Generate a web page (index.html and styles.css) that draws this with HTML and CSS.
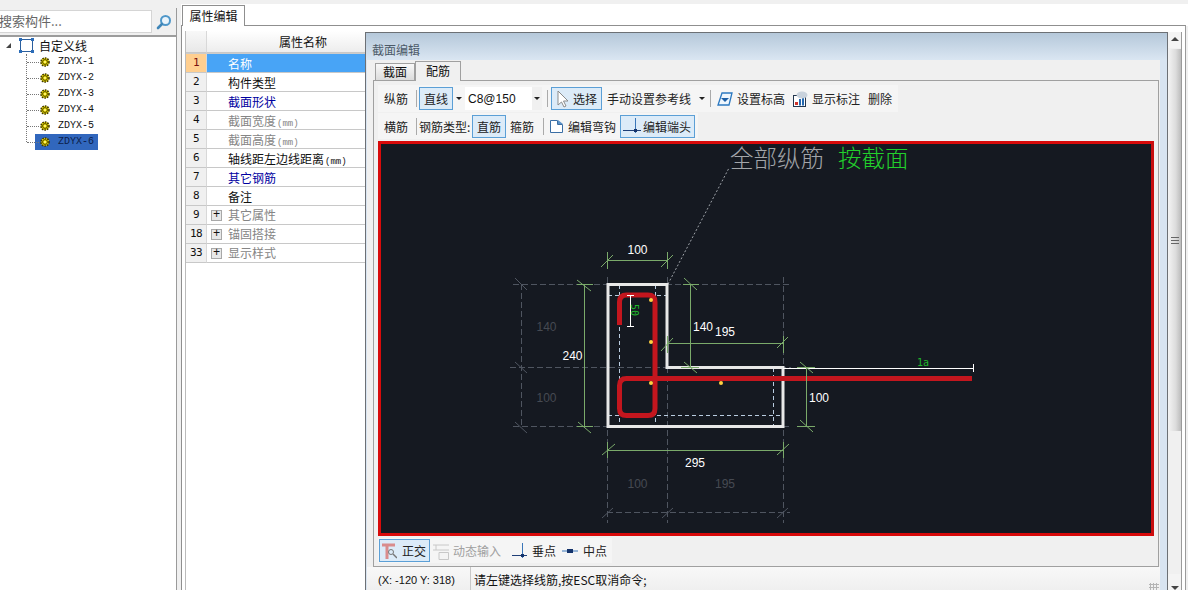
FILE: index.html
```html
<!DOCTYPE html>
<html lang="zh">
<head>
<meta charset="utf-8">
<title>属性编辑</title>
<link rel="stylesheet" href="styles.css">
</head>
<body>
<svg class="defs" width="0" height="0">
  <symbol id="gear" viewBox="0 0 10 10"><circle cx="5" cy="5" r="4" fill="#f6e800" stroke="#3f3600" stroke-width="1.600" stroke-dasharray="1.600 1"/><circle cx="5" cy="5" r="2.400" fill="none" stroke="#4a3f00"/><rect x="4" y="4" width="2" height="2" fill="#fff26a"/></symbol>
  <symbol id="perp" viewBox="0 0 18 16"><path d="M0 12.500h18" stroke="#1f3f77"/><path d="M12.500 0v15" stroke="#3a76b8"/><rect x="11" y="11" width="3" height="3" fill="#14336b"/></symbol>
</svg>
<div class="app">
  <aside class="left">
    <div class="search">
      <div class="search-box">搜索构件...</div>
      <svg class="search-icon" width="16" height="16" viewBox="0 0 16 16"><circle cx="9.500" cy="6.500" r="4.500" fill="#eaf4fb" stroke="#4f97c9" stroke-width="2"/><path d="M6 10 2 14" stroke="#3f86b8" stroke-width="2.600" stroke-linecap="round"/></svg>
    </div>
    <div class="tree">
      <div class="tree-root">
        <span class="tri"></span>
        <svg class="root-icon" width="15" height="15" viewBox="0 0 15 15"><rect x="1.500" y="1.500" width="12" height="12" fill="none" stroke="#2b5f9e"/><path d="M0 0h3v3H0zM12 0h3v3h-3zM0 12h3v3H0zM12 12h3v3h-3z" fill="#2b6cb8"/></svg>
        <span>自定义线</span>
      </div>
      <ul class="tree-list">
        <li class="tree-item"><svg class="gear" width="10" height="10"><use href="#gear"/></svg><span class="tree-label">ZDYX-1</span></li>
        <li class="tree-item"><svg class="gear" width="10" height="10"><use href="#gear"/></svg><span class="tree-label">ZDYX-2</span></li>
        <li class="tree-item"><svg class="gear" width="10" height="10"><use href="#gear"/></svg><span class="tree-label">ZDYX-3</span></li>
        <li class="tree-item"><svg class="gear" width="10" height="10"><use href="#gear"/></svg><span class="tree-label">ZDYX-4</span></li>
        <li class="tree-item"><svg class="gear" width="10" height="10"><use href="#gear"/></svg><span class="tree-label">ZDYX-5</span></li>
        <li class="tree-item selected"><svg class="gear" width="10" height="10"><use href="#gear"/></svg><span class="tree-label">ZDYX-6</span></li>
      </ul>
    </div>
  </aside>
  <main class="right">
    <div class="tabbar"><div class="main-tab">属性编辑</div></div>
    <div class="content">
      <section class="grid">
        <div class="grid-head"><div class="num-cell"></div><div class="name-cell">属性名称</div></div>
        <div class="row active"><div class="num-cell">1</div><div class="name-cell">名称</div></div>
        <div class="row"><div class="num-cell">2</div><div class="name-cell">构件类型</div></div>
        <div class="row"><div class="num-cell">3</div><div class="name-cell blue">截面形状</div></div>
        <div class="row"><div class="num-cell">4</div><div class="name-cell gray">截面宽度<small>(mm)</small></div></div>
        <div class="row"><div class="num-cell">5</div><div class="name-cell gray">截面高度<small>(mm)</small></div></div>
        <div class="row"><div class="num-cell">6</div><div class="name-cell">轴线距左边线距离<small>(mm)</small></div></div>
        <div class="row"><div class="num-cell">7</div><div class="name-cell blue">其它钢筋</div></div>
        <div class="row"><div class="num-cell">8</div><div class="name-cell">备注</div></div>
        <div class="row"><div class="num-cell">9</div><div class="name-cell gray group"><span class="plus">+</span>其它属性</div></div>
        <div class="row"><div class="num-cell">18</div><div class="name-cell gray group"><span class="plus">+</span>锚固搭接</div></div>
        <div class="row"><div class="num-cell">33</div><div class="name-cell gray group"><span class="plus">+</span>显示样式</div></div>
      </section>
      <section class="dialog">
        <div class="dialog-title">截面编辑</div>
        <div class="dialog-body">
          <div class="dlg-tabs"><div class="dlg-tab">截面</div><div class="dlg-tab on">配筋</div></div>
          <div class="dlg-panel">
            <div class="toolbar tb1">
              <span class="tool">纵筋</span><span class="sep"></span>
              <span class="tool boxed">直线</span><span class="caret"></span>
              <span class="combo">C8@150<span class="caret"></span></span>
              <span class="sep sep-a"></span>
              <span class="tool boxed select-tool"><svg width="14" height="18" viewBox="0 0 14 18"><path d="M2 1v14l3.500-3 2.500 5 2-1-2.500-5H12z" fill="#fff" stroke="#8b8b8b"/></svg>选择</span>
              <span class="tool ml2">手动设置参考线</span><span class="caret caret-b"></span>
              <span class="sep sep-b"></span>
              <span class="tool icon-tool"><svg width="16" height="14" viewBox="0 0 16 14"><path d="M5 1h10l-3 12H1z" fill="#eef6fd" stroke="#2b78c0" stroke-width="1.300"/><path d="M4 6h8l-4 4z" fill="#1c5fa6"/></svg>设置标高</span>
              <span class="tool icon-tool ml1"><svg width="16" height="16" viewBox="0 0 16 16"><rect x="1.500" y="4.500" width="12" height="11" fill="#fff" stroke="#24374f"/><path d="M8 14.500V8M11 14.500V6" stroke="#2468b0" stroke-width="2"/><rect x="3" y="11" width="3" height="3" fill="#d0342c"/><ellipse cx="10" cy="4" rx="5.500" ry="3.500" fill="#c9d2dc"/></svg>显示标注</span>
              <span class="tool ml2">删除</span>
            </div>
            <div class="toolbar tb2">
              <span class="tool">横筋</span><span class="sep"></span>
              <span class="type-label">钢筋类型:</span>
              <span class="tool boxed">直筋</span>
              <span class="tool ml1">箍筋</span><span class="sep sep-c"></span>
              <span class="tool icon-tool"><svg width="15" height="15" viewBox="0 0 15 15"><path d="M1.500 1.500h7v4h5v8h-12z" fill="#fff" stroke="#3a6ea5"/><path d="M9 1l5 4H9z" fill="#5b93c9"/></svg>编辑弯钩</span>
              <span class="tool boxed end-tool"><svg width="18" height="16"><use href="#perp"/></svg>编辑端头</span>
            </div>
            <div class="canvas">
              <svg class="drawing" width="770" height="389" viewBox="381 144 770 389">
                <g class="axis">
                  <path d="M513 284.500H791M510 367.500H791M513 426.500H791M607 512.500H790"/>
                  <path d="M521.500 284V427M607.500 277V523M667.500 277V523M783.500 277V523"/>
                </g>
                <g class="gray-ticks">
                  <path d="M515 278 527 290M515 362 527 373M515 422 527 433M602 518 613 508M662 518 673 508M777 518 788 508"/>
                </g>
                <path class="leader" d="M668 284 729 168"/>
                <g class="inner">
                  <path d="M608 295.500H666M608 415.500H782"/>
                  <path d="M619.500 285V426M655.500 285V426M773.500 368V426"/>
                </g>
                <path class="section" d="M608 284.500H667V367.500H783V426.500H608Z"/>
                <path class="rebar" d="M619.500 325V302Q619.500 295 626.500 295H648Q655 295 655 302V408.500Q655 415.500 648 415.500H626.500Q619.500 415.500 619.500 408.500V385.500Q619.500 378.500 626.500 378.500H972"/>
                <path class="rebar-link" d="M630.500 295V327M627 295.500H634M627 326.500H634"/>
                <path class="rebar-link" d="M783 368.500H973M973.500 364V372"/>
                <g class="dim">
                  <path d="M607.500 260.500H667.500M607.500 252V269M667.500 252V269M601 267 613 255M661 267 673 255"/>
                  <path d="M584.500 284V427M577 284.500H593M577 426.500H593M577 280 591 291M578 422 591 433"/>
                  <path d="M690.500 284V367M683 284.500H699M681 367.500H699M684 278 697 290M684 362 697 373"/>
                  <path d="M667 343.500H783M667.500 336V353M783.500 336V353M661 351 673 338M777 348 788 337"/>
                  <path d="M806.500 367V427M797 367.500H815M797 426.500H815M800 362 813 373M800 420 813 432"/>
                  <path d="M607 450.500H783M607.500 442V458M783.500 442V458M602 455 615 444M777 455 789 444"/>
                </g>
                <g class="dots">
                  <circle cx="651" cy="300" r="2"/><circle cx="651" cy="342" r="2"/><circle cx="651" cy="383" r="2"/><circle cx="721" cy="383" r="2"/>
                </g>
                <text class="t-title" x="730" y="167">全部纵筋</text>
                <text class="t-title green" x="838" y="167">按截面</text>
                <text class="t-dim" x="637.500" y="254">100</text>
                <text class="t-dim" x="572.500" y="360">240</text>
                <text class="t-dim" x="703" y="331">140</text>
                <text class="t-dim" x="725" y="336">195</text>
                <text class="t-dim" x="819" y="402">100</text>
                <text class="t-dim" x="695" y="467">295</text>
                <text class="t-faint" x="546.500" y="331">140</text>
                <text class="t-faint" x="546.500" y="402">100</text>
                <text class="t-faint" x="637.500" y="488">100</text>
                <text class="t-faint" x="725" y="488">195</text>
                <text class="t-small" x="917" y="366">1a</text>
                <text class="t-small" transform="translate(631 304) rotate(90)">50</text>
              </svg>
            </div>
            <div class="toolbar tb3">
              <span class="tool boxed snap"><svg width="15" height="18" viewBox="0 0 15 18"><path d="M0 3h13M5 3v14" stroke="#d98c8c" stroke-width="3"/><circle cx="9" cy="10" r="2.500" fill="none" stroke="#777"/><path d="M11 12l4 4" stroke="#777" stroke-width="1.500"/></svg>正交</span>
              <span class="tool icon-tool dim-text"><svg width="16" height="18" viewBox="0 0 16 18"><path d="M0 3h16M0 8h16M3 3v5M6 10.500h9.500v7H6z" stroke="#c8c8c8" fill="#f4f4f4"/></svg>动态输入</span>
              <span class="tool snap-tool ml5"><svg width="15" height="16" viewBox="2 0 15 16"><use href="#perp" width="18" height="16"/></svg>垂点</span>
              <span class="tool snap-tool"><svg width="16" height="8" viewBox="0 0 16 8"><path d="M0 4h16" stroke="#3a76b8"/><rect x="5" y="2" width="6" height="4" fill="#14336b"/></svg>中点</span>
            </div>
          </div>
          <div class="statusbar">
            <div class="coord">(X: -120 Y: 318)</div>
            <div class="prompt">请左键选择线筋,按ESC取消命令;</div>
            <span class="resize-grip"></span>
          </div>
        </div>
      </section>
      <div class="scroll">
        <div class="arrow up"></div>
        <div class="thumb"><span class="grip"></span></div>
        <div class="track"></div>
        <div class="arrow down"></div>
      </div>
    </div>
  </main>
</div>
</body>
</html>
```
FILE: styles.css
```css
* { box-sizing: border-box; }
html, body { margin: 0; padding: 0; height: 100%; overflow: hidden; background: #fff; }
body { font-family: "Noto Sans CJK SC", "Liberation Sans", sans-serif; font-size: 12px; color: #111; }
ul { list-style: none; margin: 0; padding: 0; }
.defs { position: absolute; }
.app { display: flex; width: 1188px; height: 590px; background: #f0f0f0; }

.left { width: 177px; flex: none; margin-top: 8px; display: flex; flex-direction: column; border-right: 1px solid #9a9a9a; }
.search { height: 27px; display: flex; align-items: flex-start; padding-top: 2px; gap: 5px; }
.search-box { width: 152px; height: 23px; background: #fff; border: 1px solid #d5d5d5; border-left: 0; color: #666; font-size: 13px; line-height: 20px; white-space: nowrap; overflow: hidden; text-indent: -1px; }
.search-icon { margin-top: 4px; margin-left: -1px; }
.tree { flex: 1; background: #fff; border-top: 2px solid #9c9c9c; }
.tree-root { display: flex; align-items: center; height: 17px; padding-left: 6px; font-size: 12px; gap: 4px; }
.tri { width: 0; height: 0; border-left: 5px solid transparent; border-bottom: 5px solid #444; margin-right: 4px; }
.root-icon { flex: none; margin-right: 1px; }
.tree-list { margin-left: 26px; border-left: 1px dotted #777; height: 88px; }
.tree-item { display: flex; align-items: center; height: 16px; position: relative; padding-left: 13px; gap: 8px; font-family: "Liberation Mono", monospace; font-size: 10px; }
.tree-item::before { content: ""; position: absolute; left: 0; width: 12px; top: 8px; border-top: 1px dotted #777; }
.gear { flex: none; }
.tree-label { line-height: 16px; }
.tree-item.selected { z-index: 1; }
.tree-item.selected::after { content: ""; position: absolute; left: 8px; top: 0; width: 63px; height: 16px; background: #3167bd; z-index: -1; }
.tree-item.selected .tree-label { color: #0b1d4a; }

.right { flex: 1; min-width: 0; display: flex; flex-direction: column; padding-left: 4px; padding-top: 4px; }
.tabbar { height: 22px; padding-left: 1px; padding-top: 1px; flex: none; background: #fff; }
.main-tab { width: 63px; height: 21px; background: #fff; border: 1px solid #8f8f8f; border-bottom: 0; text-align: center; line-height: 19px; font-size: 12px; position: relative; z-index: 1; }
.content { flex: 1; display: flex; min-height: 0; background: #fff; border-top: 1px solid #8f8f8f; border-left: 1px solid #8f8f8f; border-right: 1px solid #9a9a9a; margin-top: -1px; padding: 5px 0 0 3px; width: 1005px; }
.grid { width: 180px; flex: none; border-left: 1px solid #bbb; }
.grid-head { display: flex; height: 23px; background: linear-gradient(#fff, #ececec); font-size: 12px; border-bottom: 1px solid #ccc; }
.grid-head .num-cell { background: linear-gradient(#f8f8f8, #e8e8e8); }
.grid-head .name-cell { padding-left: 72px; line-height: 22px; }
.row { display: flex; height: 19px; }
.num-cell { width: 21px; flex: none; background: #f0f0f0; border-right: 1px solid #d8d8d8; border-bottom: 1px solid #c8c8c8; text-align: center; font-family: "DejaVu Sans Mono", monospace; font-size: 11px; letter-spacing: -.6px; line-height: 18px; }
.name-cell { flex: 1; padding-left: 21px; border-bottom: 1px solid #c8c8c8; font-size: 12px; line-height: 20px; white-space: nowrap; }
.name-cell small { font-family: "Liberation Mono", monospace; font-size: 9px; margin-left: 1px; }
.row.active .num-cell { background: #ffcf90; color: #7a1010; }
.row.active .name-cell { background: #48a4f6; color: #fff; }
.blue { color: #0000a0; }
.gray { color: #858585; }
.group { padding-left: 4px; display: flex; align-items: center; }
.plus { width: 11px; height: 11px; border: 1px solid #a8a8a8; background: #e8e8e8; color: #111; font-family: "Liberation Mono", monospace; font-size: 12px; line-height: 9px; text-align: center; margin-right: 6px; flex: none; }

.dialog { width: 803px; flex: none; margin-top: 1px; display: flex; flex-direction: column; border: 1px solid #6c7075; border-bottom: 0; background: #d8e4f1; }
.dialog-title { height: 27px; flex: none; background: linear-gradient(#b5c8da, #dae6f2); color: #4c5a68; font-size: 12px; line-height: 33px; padding-left: 6px; }
.dialog-body { flex: 1; min-height: 0; margin: 0 7px 0 1px; background: #f0f0f0; padding: 0 0 0 6px; display: flex; flex-direction: column; }
.dlg-tabs { display: flex; align-items: flex-end; height: 20px; flex: none; padding-left: 2px; }
.dlg-tab { width: 40px; height: 17px; background: linear-gradient(#f8f8f8, #dcdcdc); border: 1px solid #a0a0a0; border-bottom: 0; text-align: center; font-size: 12px; line-height: 16px; }
.dlg-tab.on { width: 46px; height: 20px; background: #f0f0f0; line-height: 18px; position: relative; z-index: 1; margin-bottom: -1px; }
.dlg-panel { height: 487px; flex: none; border: 1px solid #a0a0a0; padding: 4px 4px 0 4px; margin-right: 1px; display: flex; flex-direction: column; background: #f0f0f0; }
.toolbar { display: flex; align-items: center; flex: none; font-size: 12px; background: #f5f5f5; width: max-content; }
.tb1 { height: 27px; padding: 0 3px; }
.tb2 { height: 26px; padding: 0 3px; margin-top: 1px; }
.tb3 { height: 25px; margin-top: 2px; padding-right: 2px; }
.tool { display: inline-flex; align-items: center; gap: 4px; height: 24px; padding: 0 3px; white-space: nowrap; color: #222; }
.type-label { width: 53px; white-space: nowrap; color: #222; }
.boxed { background: #dcebf8; border: 1px solid #5b9fd6; padding: 0 4px; height: 23px; }
.select-tool { gap: 3px; }
.end-tool { margin-left: 1px; gap: 2px; padding: 0 3px 0 2px; }
.snap { margin-left: 1px; gap: 5px; padding: 0 3px 0 2px; }
.snap-tool { gap: 5px; }
.ml1 { margin-left: 1px; }
.ml2 { margin-left: 2px; }
.ml5 { margin-left: 5px; }
.sep { width: 1px; height: 17px; background: #aaa; margin: 0 2px 0 5px; flex: none; }
.sep-a { margin: 0 3px 0 5px; }
.sep-b { margin: 0 3px 0 0; }
.sep-c { margin: 0 2px 0 6px; }
.caret { width: 0; height: 0; border-left: 3px solid transparent; border-right: 3px solid transparent; border-top: 3px solid #222; margin: 0 3px; flex: none; }
.caret-b { margin: 0 5px; }
.combo { width: 77px; height: 23px; background: linear-gradient(90deg, #fff 87%, #f0f0f0 87%); display: flex; align-items: center; justify-content: space-between; font-family: "Liberation Sans", sans-serif; font-size: 12px; padding-left: 3px; }
.combo .caret { margin: 0 2px; }
.canvas { width: 776px; height: 395px; flex: none; border: 3px solid; border-color: #d80a0a #c80f0f #d80a0a #d80a0a; background: #151921; margin-top: 2px; }
.drawing { display: block; overflow: visible; }
.axis path { fill: none; stroke: #4f5560; stroke-dasharray: 6 3; }
.gray-ticks path { fill: none; stroke: #4f5560; }
.leader { fill: none; stroke: #9da2a8; stroke-dasharray: 2 2; }
.inner path { fill: none; stroke: #b9cce0; stroke-dasharray: 4 3; }
.section { fill: none; stroke: #e8e8e8; stroke-width: 3; }
.rebar { fill: none; stroke: #c3161e; stroke-width: 5; }
.rebar-link { fill: none; stroke: #fff; }
.dim path { fill: none; stroke: #7aaa6a; }
.dots circle { fill: #ffd040; }
svg text { font-family: "Liberation Sans", sans-serif; }
svg .t-title { font-family: "Noto Sans CJK SC", sans-serif; font-size: 23.500px; font-weight: 300; fill: #a2a5a9; }
svg .t-title.green { fill: #22d02c; }
.t-dim { font-size: 12px; fill: #fff; text-anchor: middle; }
.t-faint { font-size: 12px; fill: #464a52; text-anchor: middle; }
svg .t-small { font-family: "DejaVu Sans Mono", monospace; font-size: 10px; fill: #1fb52a; }
.dim-text { color: #a0a0a0; }
.statusbar { flex: 1; display: flex; align-items: center; margin-left: -6px; background: linear-gradient(#f8f8f8, #eeeeee); font-size: 12px; position: relative; }
.coord { width: 104px; padding-left: 11px; font-family: "Liberation Sans", sans-serif; font-size: 11px; border-right: 1px solid #c8c8c8; height: 100%; line-height: 26px; flex: none; }
.prompt { padding-left: 3px; line-height: 26px; height: 100%; }
.resize-grip { position: absolute; right: 1px; bottom: 0; width: 10px; height: 10px; background: radial-gradient(circle, #b4b4b4 1px, transparent 1.200px) 0 0 / 3px 3px; }

.scroll { width: 14px; flex: none; margin-top: 1px; display: flex; flex-direction: column; border-right: 1px solid #9a9a9a; background: #f0f0f0; }
.arrow { height: 16px; flex: none; position: relative; background: #f4f4f4; }
.arrow::after { content: ""; position: absolute; left: 3px; width: 0; height: 0; border-left: 4px solid transparent; border-right: 4px solid transparent; }
.up::after { top: 5px; border-bottom: 4px solid #444; }
.down::after { bottom: 0; border-top: 4px solid #444; }
.thumb { height: 382px; margin-top: 1px; flex: none; background: linear-gradient(90deg, #f4f4f4, #dcdcdc 60%, #bcbcbc); display: flex; align-items: center; justify-content: center; }
.grip { width: 8px; height: 7px; border-top: 1px solid #666; border-bottom: 1px solid #666; background: linear-gradient(#666, #666) 0 2px / 8px 1px no-repeat; }
.track { flex: 1; }
```
